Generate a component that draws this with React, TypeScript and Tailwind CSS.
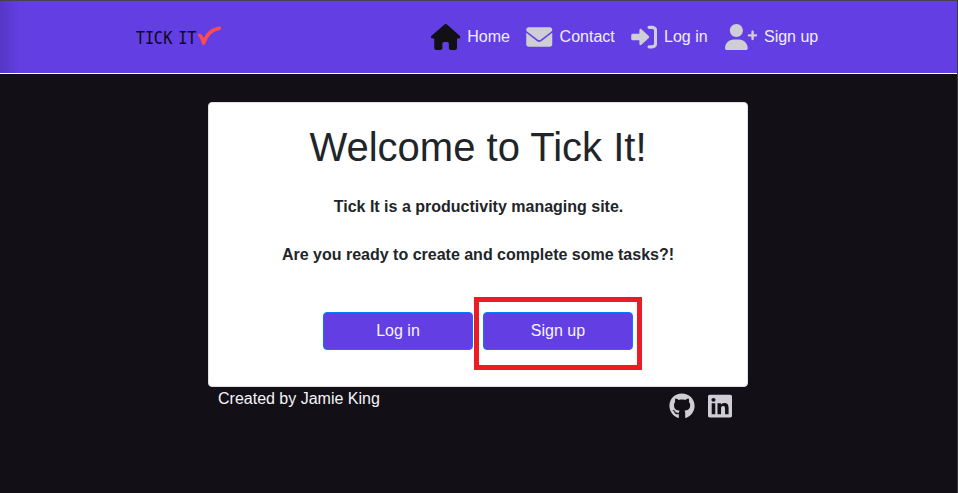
import { FaGithub, FaHouse, FaLinkedin } from "react-icons/fa6";

type IconProps = { className?: string };

function EnvelopeIcon({ className }: IconProps) {
  return (
    <svg viewBox="0 0 512 512" fill="currentColor" className={className}>
      <path d="M256 352c-16.53 0-33.06-5.422-47.16-16.41L0 173.2V400C0 426.5 21.49 448 48 448h416c26.51 0 48-21.49 48-48V173.2l-208.8 162.5C289.1 346.6 272.5 352 256 352zM16.29 145.3l212.2 165.1c16.19 12.6 38.87 12.6 55.06 0l212.2-165.1C505.1 137.3 512 125 512 112C512 85.49 490.5 64 464 64h-416C21.49 64 0 85.49 0 112C0 125 6.01 137.3 16.29 145.3z" />
    </svg>
  );
}

function LoginIcon({ className }: IconProps) {
  return (
    <svg viewBox="0 0 512 512" fill="currentColor" className={className}>
      <path d="M344.7 238.5l-144.1-136C193.7 95.97 183.4 94.17 174.6 97.95C165.8 101.8 160.1 110.4 160.1 120V192H32.02C14.33 192 0 206.3 0 224v64c0 17.68 14.33 32 32.02 32h128.1v72c0 9.578 5.707 18.25 14.51 22.05c8.803 3.781 19.03 1.984 26-4.594l144.1-136C354.3 264.1 354.3 247.9 344.7 238.5zM416 32h-64c-17.67 0-32 14.33-32 32s14.33 32 32 32h64c17.67 0 32 14.33 32 32v256c0 17.67-14.33 32-32 32h-64c-17.67 0-32 14.33-32 32s14.33 32 32 32h64c53.02 0 96-42.98 96-96V128C512 74.98 469 32 416 32z" />
    </svg>
  );
}

function UserPlusIcon({ className }: IconProps) {
  return (
    <svg viewBox="0 0 640 512" fill="currentColor" className={className}>
      <path d="M224 256c70.7 0 128-57.31 128-128S294.7 0 224 0C153.3 0 96 57.31 96 128S153.3 256 224 256zM274.7 304H173.3C77.61 304 0 381.6 0 477.3C0 496.5 15.52 512 34.66 512h378.7C432.5 512 448 496.5 448 477.3C448 381.6 370.4 304 274.7 304zM616 200h-48v-48C568 138.8 557.3 128 544 128s-24 10.75-24 24v48h-48C458.8 200 448 210.8 448 224s10.75 24 24 24h48v48C520 309.3 530.8 320 544 320s24-10.75 24-24v-48h48C629.3 248 640 237.3 640 224S629.3 200 616 200z" />
    </svg>
  );
}

const links = [
  { label: "Home", Icon: FaHouse, box: "w-[95px]", icon: "w-[29.25px] mr-[6.75px] text-[#120f17]" },
  { label: "Contact", Icon: EnvelopeIcon, box: "w-[104.7px]", icon: "w-[26.5px] mr-[6.8px] text-[#d0ced5]" },
  { label: "Log in", Icon: LoginIcon, box: "w-[94px]", icon: "w-[26.5px] mr-[6.5px] text-[#d0ced5]" },
  { label: "Sign up", Icon: UserPlusIcon, box: "w-[94px]", icon: "w-[32.5px] mr-[6.5px] text-[#d0ced5]" },
];

function Logo() {
  return (
    <svg width="90" height="28" viewBox="0 0 90 28" className="shrink-0">
      <text x="6.4 17.1 27.4 38.6 48 56.3 67" y="21" transform="scale(0.85 1)" textAnchor="middle" fontFamily="'DejaVu Sans Mono', monospace" fontSize="18" fill="#0c0718" xmlSpace="preserve">TICK IT</text>
      <path d="M64.8 12.3 C66.6 13.5 67.7 16.5 68.5 20.2 C70.8 13.5 76 6.5 84.3 5.3" fill="none" stroke="#ff4d4f" strokeWidth="3.4" strokeLinecap="round" strokeLinejoin="round" />
    </svg>
  );
}

export default function App() {
  return (
    <div className="relative h-[493px] w-[958px] overflow-hidden bg-[#120f17] font-['Liberation_Sans',Arial,sans-serif] text-base leading-6 text-[#212529]">
      <header className="flex h-[74px] border-t border-b border-t-[#47434d] border-b-white bg-[#633fe3] bg-linear-to-r from-[#5636c5] to-[#633fe3] to-[20px] pl-[135px]">
        <div className="w-[296.3px] pt-[22px]">
          <Logo />
        </div>
        <nav className="flex pt-[23px] text-[#f0edfc]">
          {links.map(({ label, Icon, box, icon }) => (
            <a key={label} className={`flex h-[26px] shrink-0 items-center whitespace-nowrap ${box}`}>
              <Icon className={`h-[26px] shrink-0 ${icon}`} />
              {label}
            </a>
          ))}
        </nav>
      </header>
      <main className="mx-auto mt-7 w-[540px] -translate-x-px">
        <section className="flex h-[285px] flex-col items-center rounded border border-[#dfdfdf] bg-white text-center">
          <h1 className="mt-5 text-[40px] leading-[48px]">Welcome to Tick It!</h1>
          <p className="mt-6 pl-px font-bold">Tick It is a productivity managing site.</p>
          <p className="mt-6 font-bold">Are you ready to create and complete some tasks?!</p>
          <div className="mt-[45px] flex gap-[10px] text-[#f7f5fe]">
            <button className="h-[38px] w-[150px] rounded border border-[#007bff] bg-[#633fe3]">Log in</button>
            <div className="relative">
              <button className="h-[38px] w-[150px] rounded border border-[#007bff] bg-[#633fe3]">Sign up</button>
              <div className="pointer-events-none absolute -top-[15px] -left-[9px] h-[73px] w-[168px] border-5 border-[#ed1c24]" />
            </div>
          </div>
        </section>
        <footer className="flex justify-between pr-4 pl-[10px] text-[#f5f5f7]">
          <span>Created by Jamie King</span>
          <div className="flex gap-[13px] pt-[6px] text-[#d0ced5]">
            <FaGithub className="h-[26px] w-[26px]" />
            <FaLinkedin className="h-[26px] w-[24px]" preserveAspectRatio="none" />
          </div>
        </footer>
      </main>
      <div className="absolute inset-y-0 right-0 w-px bg-[#3a383c]" />
    </div>
  );
}
